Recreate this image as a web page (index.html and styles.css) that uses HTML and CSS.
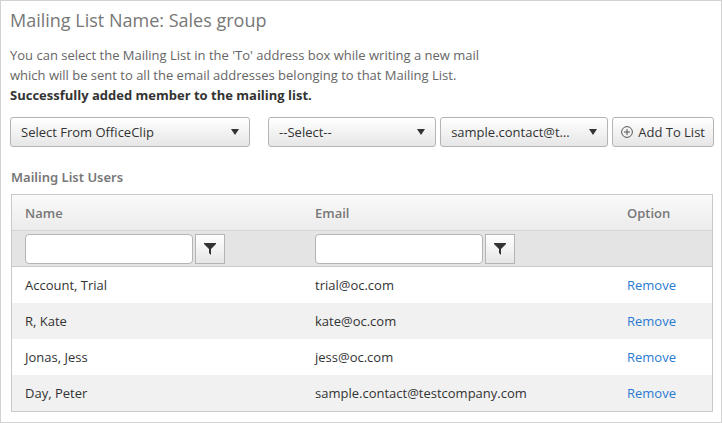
FILE: index.html
```html
<!DOCTYPE html>
<html lang="en">

<head>
    <meta charset="UTF-8">
    <meta name="viewport" content="width=device-width, initial-scale=1.0">
    <title>Mailing List</title>
    <link rel="stylesheet" href="styles.css">
</head>

<body>
    <main class="page">
        <h1>Mailing List Name: Sales group</h1>
        <p class="intro">You can select the Mailing List in the 'To' address box while writing a new mail<br>
            which will be sent to all the email addresses belonging to that Mailing List.</p>
        <p class="message">Successfully added member to the mailing list.</p>

        <form class="toolbar">
            <div class="dropdown source">
                <select aria-label="Source">
                    <option>Select From OfficeClip</option>
                </select>
            </div>
            <div class="dropdown">
                <select aria-label="Group">
                    <option>--Select--</option>
                </select>
            </div>
            <div class="dropdown">
                <select aria-label="Contact">
                    <option>sample.contact@testcompany.com</option>
                </select>
            </div>
            <button type="button" class="add">
                <svg width="12" height="12" viewBox="0 0 12 12" fill="none" stroke="#555">
                    <circle cx="6" cy="6" r="5.4" />
                    <path d="M6 3v6M3 6h6" />
                </svg>
                Add To List
            </button>
        </form>

        <h2>Mailing List Users</h2>
        <table class="users">
            <thead>
                <tr>
                    <th class="name">Name</th>
                    <th>Email</th>
                    <th class="option">Option</th>
                </tr>
                <tr class="filters">
                    <td>
                        <div class="filter">
                            <input type="text" aria-label="Filter by name">
                            <button type="button" aria-label="Apply name filter">
                                <svg width="12" height="12" viewBox="0 0 12 12" fill="#333">
                                    <path d="M0 0h12v1L7 6v6L5 10V6L0 1z" />
                                </svg>
                            </button>
                        </div>
                    </td>
                    <td>
                        <div class="filter">
                            <input type="text" aria-label="Filter by email">
                            <button type="button" aria-label="Apply email filter">
                                <svg width="12" height="12" viewBox="0 0 12 12" fill="#333">
                                    <path d="M0 0h12v1L7 6v6L5 10V6L0 1z" />
                                </svg>
                            </button>
                        </div>
                    </td>
                    <td></td>
                </tr>
            </thead>
            <tbody>
                <tr>
                    <td>Account, Trial</td>
                    <td>trial@oc.com</td>
                    <td><a href="#">Remove</a></td>
                </tr>
                <tr>
                    <td>R, Kate</td>
                    <td>kate@oc.com</td>
                    <td><a href="#">Remove</a></td>
                </tr>
                <tr>
                    <td>Jonas, Jess</td>
                    <td>jess@oc.com</td>
                    <td><a href="#">Remove</a></td>
                </tr>
                <tr>
                    <td>Day, Peter</td>
                    <td>sample.contact@testcompany.com</td>
                    <td><a href="#">Remove</a></td>
                </tr>
            </tbody>
        </table>
    </main>
</body>

</html>
```
FILE: styles.css
```css
* {
    box-sizing: border-box;
}

body {
    margin: 0;
    background: #fff;
    color: #333;
    font-family: "Segoe UI", "Open Sans", "Noto Sans", sans-serif;
    font-size: 13px;
    line-height: 20px;
}

.page {
    min-height: 100vh;
    padding: 6px 7px 10px 9px;
    border: 1px solid #d2d2d2;
}

h1 {
    margin: 0 0 12px;
    color: #777;
    font-size: 18px;
    font-weight: 400;
    line-height: 26px;
}

h2 {
    margin: 20px 0 7px 1px;
    color: #777;
    font-family: "Segoe UI", "Noto Sans", sans-serif;
    font-size: 13px;
    font-weight: 600;
    line-height: 20px;
}

p {
    margin: 0;
}

.intro {
    color: #666;
}

.message {
    font-weight: 700;
}

.toolbar {
    display: flex;
    gap: 4px;
    margin-top: 12px;
}

.dropdown {
    display: grid;
    flex: 168 1 0;
    align-items: center;
    min-width: 0;
}

.dropdown.source {
    flex-grow: 240;
    margin-right: 14px;
}

.dropdown select,
.dropdown::after {
    grid-area: 1 / 1;
}

.dropdown::after {
    content: "";
    justify-self: end;
    margin-right: 11px;
    border: 4px solid transparent;
    border-top: 6px solid #333;
    border-bottom: 0;
    pointer-events: none;
}

select,
button,
input {
    height: 30px;
    margin: 0;
    border: 1px solid #b4b4b4;
    border-radius: 3px;
    color: #333;
    font: inherit;
}

select,
button {
    background: linear-gradient(#fff, #e6e6e6);
}

select {
    width: 100%;
    padding: 0 32px 0 10px;
    appearance: none;
    text-overflow: ellipsis;
}

.add {
    display: flex;
    flex: none;
    align-items: center;
    gap: 5px;
    padding: 0 8px;
    white-space: nowrap;
}

.users {
    width: calc(100% - 2px);
    margin-left: 1px;
    border: 1px solid #c9c9c9;
    border-spacing: 0;
    table-layout: fixed;
}

th,
td {
    height: 36px;
    padding: 0 13px;
    text-align: left;
}

th {
    border-bottom: 1px solid #d5d5d5;
    color: #777;
    font-weight: 600;
}

thead tr {
    background: linear-gradient(#fafafa, #ebebeb);
}

thead .filters {
    background: #e4e4e4;
}

.filters td {
    border-bottom: 1px solid #c9c9c9;
}

.name {
    width: 290px;
}

.option {
    width: 98px;
}

.filter {
    display: flex;
    gap: 2px;
}

.filter input {
    width: 168px;
    padding: 0 8px;
    border-radius: 4px;
    background: #fff;
}

.filter button {
    display: flex;
    align-items: center;
    justify-content: center;
    width: 30px;
    padding: 0;
    border-radius: 0;
}

tbody tr:nth-child(even) {
    background: #f1f1f1;
}

a {
    color: #2a7ad2;
    text-decoration: none;
}
```
